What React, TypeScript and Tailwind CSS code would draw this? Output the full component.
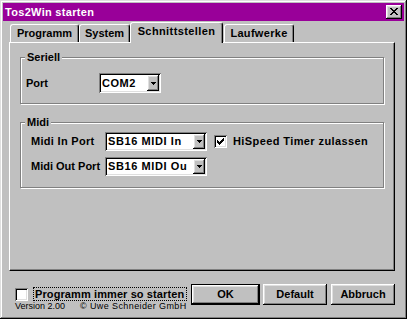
import React from 'react';

const raised =
  'shadow-[inset_-1px_-1px_0_#000,inset_1px_1px_0_#fff,inset_-2px_-2px_0_#808080,inset_2px_2px_0_#dfdfdf]';
const sunken =
  'shadow-[inset_1px_1px_0_#808080,inset_-1px_-1px_0_#fff,inset_2px_2px_0_#000,inset_-2px_-2px_0_#dfdfdf]';

function Arrow() {
  return (
    <svg width="5" height="3" viewBox="0 0 5 3" shapeRendering="crispEdges">
      <path d="M0 0h5v1H0z M1 1h3v1H1z M2 2h1v1H2z" fill="#000" />
    </svg>
  );
}

function Combo({ cls, text, track }: { cls: string; text: string; track: string }) {
  return (
    <div className={`flex bg-white p-[2px] ${sunken} ${cls}`}>
      <div className={`flex-1 overflow-hidden whitespace-nowrap pl-[1px] flex items-center ${track}`}>{text}</div>
      <div className={`w-[12px] flex items-center justify-center bg-[#c0c0c0] ${raised}`}>
        <Arrow />
      </div>
    </div>
  );
}

function CheckBox({ checked }: { checked: boolean }) {
  return (
    <div className={`w-[13px] h-[13px] bg-white p-[3px] ${sunken}`}>
      {checked && (
        <svg width="7" height="7" viewBox="0 0 7 7" shapeRendering="crispEdges" className="block">
          <path
            d="M6 0h1v1h-1z M5 1h2v1h-2z M0 2h1v1H0z M4 2h3v1H4z M0 3h2v1H0z M3 3h3v1H3z M0 4h5v1H0z M1 5h3v1H1z M2 6h1v1H2z"
            fill="#000"
          />
        </svg>
      )}
    </div>
  );
}

function Tab({ label, cls, selected }: { label: string; cls: string; selected?: boolean }) {
  const base =
    'flex justify-center border-l border-t border-r border-l-white border-t-white border-r-black rounded-t-[3px] bg-[#c0c0c0] shadow-[inset_-1px_0_0_#808080]';
  return selected ? (
    <div className={`${base} relative z-10 h-[21px] -mb-[1px] items-center pb-[3px] ${cls}`}>{label}</div>
  ) : (
    <div className={`${base} h-[18px] items-center ${cls}`}>{label}</div>
  );
}

function Group({ label, cls, children }: { label: string; cls: string; children: React.ReactNode }) {
  return (
    <div className={`relative border border-[#808080] shadow-[inset_1px_1px_0_#fff,1px_1px_0_#fff] ${cls}`}>
      <div className="absolute -top-[7px] left-[4px] bg-[#c0c0c0] px-[2px] leading-[13px]">{label}</div>
      {children}
    </div>
  );
}

function Button({ label, cls, isDefault }: { label: string; cls: string; isDefault?: boolean }) {
  return isDefault ? (
    <div className={`border border-black bg-[#c0c0c0] ${cls}`}>
      <div className={`w-full h-full flex items-center justify-center ${raised}`}>{label}</div>
    </div>
  ) : (
    <div className={`flex items-center justify-center bg-[#c0c0c0] ${raised} ${cls}`}>{label}</div>
  );
}

export default function App() {
  return (
    <div
      className={`w-[407px] h-[319px] bg-[#c0c0c0] p-[3px] flex flex-col font-['Liberation_Sans',Arial,sans-serif] font-bold text-[11px] leading-[13px] text-black shadow-[inset_-1px_-1px_0_#000,inset_1px_1px_0_#dfdfdf,inset_-2px_-2px_0_#808080,inset_2px_2px_0_#fff]`}
    >
      {/* Title bar */}
      <div className="h-[18px] bg-[#990099] flex items-center justify-between pl-[2px] pr-[2px]">
        <span className="text-white tracking-[0.3px]">Tos2Win starten</span>
        <div className={`w-[16px] h-[14px] bg-[#c0c0c0] flex items-center justify-center pb-[1px] ${raised}`}>
          <svg width="8" height="7" viewBox="0 0 8 7" shapeRendering="crispEdges">
            <path
              d="M0 0h2v1H0z M6 0h2v1H6z M1 1h2v1H1z M5 1h2v1H5z M2 2h4v1H2z M3 3h2v1H3z M2 4h4v1H2z M1 5h2v1H1z M5 5h2v1H5z M0 6h2v1H0z M6 6h2v1H6z"
              fill="#000"
            />
          </svg>
        </div>
      </div>

      {/* Tabs */}
      <div className="h-[21px] flex items-end pl-[7px]">
        <Tab label="Programm" cls="w-[69px]" />
        <Tab label="System" cls="w-[51px]" />
        <Tab label="Schnittstellen" cls="w-[93px] tracking-[0.4px]" selected />
        <Tab label="Laufwerke" cls="w-[70px] ml-[1px] tracking-[0.3px]" />
      </div>

      {/* Panel */}
      <div className="ml-[6px] w-[386px] h-[229px] border border-l-white border-t-white border-r-black border-b-black shadow-[inset_-1px_-1px_0_#808080] flex flex-col">
        <Group label="Seriell" cls="ml-[10px] mt-[14px] w-[364px] h-[47px]">
          <div className="flex items-center pt-[15px] pl-[5px]">
            <div className="w-[73px]">Port</div>
            <Combo cls="w-[62px] h-[20px]" text="COM2" track="tracking-[0.5px]" />
          </div>
        </Group>

        <Group label="Midi" cls="ml-[10px] mt-[18px] w-[364px] h-[66px]">
          <div className="flex flex-col pt-[9px] pl-[10px]">
            <div className="flex items-center">
              <div className="w-[74px] tracking-[0.3px]">Midi In Port</div>
              <Combo cls="w-[102px] h-[19px]" text="SB16 MIDI In" track="tracking-[0.6px]" />
              <div className="ml-[7px]">
                <CheckBox checked />
              </div>
              <div className="ml-[6px] tracking-[0.4px]">HiSpeed Timer zulassen</div>
            </div>
            <div className="flex items-center mt-[6px]">
              <div className="w-[74px] whitespace-nowrap">Midi Out Port</div>
              <Combo cls="w-[102px] h-[19px]" text="SB16 MIDI Ou" track="tracking-[0.6px]" />
            </div>
          </div>
        </Group>
      </div>

      {/* Bottom */}
      <div className="flex-1 flex">
        <div className="w-[188px] pl-[12px] pt-[16px] flex flex-col">
          <div className="flex items-center h-[14px]">
            <CheckBox checked={false} />
            <div className="ml-[5px] h-[14px] border border-dotted border-black pl-[1px] pr-[2px] flex items-center tracking-[0.1px]">
              Programm immer so starten
            </div>
          </div>
          <div className="flex font-normal text-[9px] leading-[10px]">
            <span className="w-[65px]">Version 2.00</span>
            <span className="tracking-[0.4px]">© Uwe Schneider GmbH</span>
          </div>
        </div>
        <div className="flex pt-[13px]">
          <Button label="OK" cls="w-[69px] h-[21px]" isDefault />
          <Button label="Default" cls="ml-[3px] w-[64px] h-[21px]" />
          <Button label="Abbruch" cls="ml-[4px] w-[64px] h-[21px]" />
        </div>
      </div>
    </div>
  );
}
